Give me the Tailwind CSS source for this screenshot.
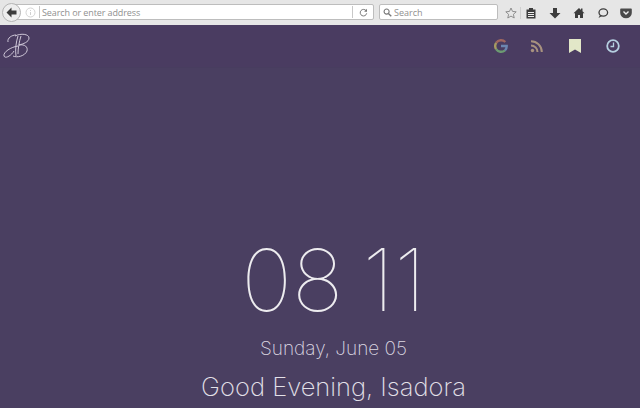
<!DOCTYPE html>
<html lang="en">
<head>
  <meta charset="UTF-8" />
  <title>New Tab</title>
  <script src="https://cdn.jsdelivr.net/npm/@tailwindcss/browser@4"></script>
</head>
<body class="w-[640px] h-[408px] overflow-hidden bg-[#4a3f61] font-['Inter',sans-serif]">
  <!-- Browser toolbar -->
  <div class="h-[25px] bg-[#e6e6e6] flex items-center relative font-['Open_Sans',sans-serif] text-[9px] text-[#909090]">
    <div class="absolute left-[2px] top-[3px] w-[19px] h-[19px] rounded-full bg-[#eeeeee] border border-[#b5b5b5] flex items-center justify-center z-10">
      <svg class="w-[11px] h-[11px]" viewBox="0 0 11 11"><path d="M0.500 5.500L5.500 0.500V3.500H10.500V7.500H5.500V10.500z" fill="#3d3d3d"/></svg>
    </div>
    <div class="ml-[12px] w-[362px] h-[16px] -mt-[1px] bg-white border border-[#bdbdbd] rounded-[2px] flex items-center">
      <svg class="ml-[12px] w-[11px] h-[11px]" viewBox="0 0 11 11"><circle cx="5.500" cy="5.500" r="4.500" fill="none" stroke="#d4d4d4"/><path d="M5.500 5v3M5.500 3v1" stroke="#d0d0d0"/></svg>
      <div class="ml-[3px] w-px h-[12px] bg-[#c8c8c8]"></div>
      <span class="ml-[2px] pt-[2px] tracking-[-0.1px]">Search or enter address</span>
      <div class="ml-auto mr-[1px] w-px h-[12px] bg-[#c8c8c8]"></div>
      <svg class="mx-[5px] w-[9px] h-[9px]" viewBox="0 0 11 11"><path d="M8.800 3.500a4 4 0 1 0 .6 3" fill="none" stroke="#777" stroke-width="1.200"/><path d="M9.800 1v3.500h-3.500z" fill="#777"/></svg>
    </div>
    <div class="ml-[5px] -mt-[1px] w-[119px] h-[16px] bg-white border border-[#bdbdbd] rounded-[2px] flex items-center">
      <svg class="ml-[3px] w-[9px] h-[9px]" viewBox="0 0 10 10"><circle cx="4" cy="4" r="2.800" fill="none" stroke="#777" stroke-width="1.200"/><path d="M6 6l3.200 3.200" stroke="#777" stroke-width="1.500"/></svg>
      <span class="ml-[2px] pt-[2px]">Search</span>
    </div>
    <svg class="ml-[7px] w-[12px] h-[12px]" viewBox="0 0 12 12"><path d="M6 1l1.500 3.400 3.700.4-2.800 2.500.8 3.700-3.200-1.900-3.200 1.900.8-3.700L.8 4.800l3.700-.4z" fill="none" stroke="#8e8e8e"/></svg>
    <div class="ml-[3px] w-px h-[12px] bg-[#cfcfcf]"></div>
    <div class="ml-[4px] flex items-center gap-[12px]">
      <svg class="w-[12px] h-[12px]" viewBox="0 0 12 12"><path d="M1.500 2.500h9v9h-9z" fill="#3d3d3d"/><path d="M4 1h4v2.500H4z" fill="#3d3d3d"/><path d="M3 5.500h6M3 7.500h6M3 9.500h6" stroke="#eee"/></svg>
      <svg class="w-[12px] h-[12px]" viewBox="0 0 12 12"><path d="M4 1h4v5h3.500L6 11.500.5 6H4z" fill="#3d3d3d"/></svg>
      <svg class="w-[12px] h-[12px]" viewBox="0 0 12 12"><path d="M6 1L.5 6.200H2V11h3V8h2v3h3V6.200h1.500L9.500 4.300V1.500H8v1.400z" fill="#3d3d3d"/></svg>
      <svg class="w-[12px] h-[12px]" viewBox="0 0 12 12"><ellipse cx="6.300" cy="5.500" rx="4.300" ry="3.600" fill="none" stroke="#3d3d3d" stroke-width="1.300"/><path d="M3 8l-1.500 3 3.500-2z" fill="#3d3d3d"/></svg>
      <svg class="w-[12px] h-[12px] -ml-px" viewBox="0 0 12 12"><path d="M1 1.500h10a.8.8 0 0 1 .8.8V6a5.800 5.200 0 0 1-11.600 0V2.300a.8.800 0 0 1 .8-.8z" fill="#4a4a4a"/><path d="M3.500 4.500L6 7l2.500-2.500" fill="none" stroke="#eee" stroke-width="1.400"/></svg>
    </div>
  </div>

  <!-- App header -->
  <header class="h-[43px] bg-[#4a3c61] border-b border-[#483d5f] flex items-center justify-between">
    <svg class="ml-[3px] w-[28px] h-[28px]" viewBox="0 0 28 28" fill="none" stroke="#dcd6e4" stroke-width="0.900">
      <path d="M12 4C18 1 26 2 26 6C26 10 20 12 16 13C22 12 25 15 24 19C22 24 14 26 10 24"/>
      <path d="M15 4C13 10 12 18 13 24"/>
      <path d="M18 4C16 10 15 17 15 22"/>
      <path d="M5 10C4 6 9 3 13 3"/>
      <path d="M15 14C8 15 0 20 1 24C2 27 8 24 11 19"/>
    </svg>
    <div class="flex items-center">
      <svg class="w-[14px] h-[14px]" viewBox="0 0 14 14" fill="none" stroke-width="2.400">
        <path d="M11.300 3A6 6 0 0 0 2.200 3.800" stroke="#a0675f"/>
        <path d="M2.200 3.800a6 6 0 0 0-.1 6.300" stroke="#a69a62"/>
        <path d="M2.100 10.100A6 6 0 0 0 11 11.300" stroke="#6c9a72"/>
        <path d="M11 11.300A5.600 5.600 0 0 0 12.700 7H7" stroke="#6c86b0"/>
      </svg>
      <svg class="ml-[22px] w-[13px] h-[13px]" viewBox="0 0 13 13" fill="none" stroke="#a8927f" stroke-width="2">
        <circle cx="2.500" cy="10.500" r="1.700" fill="#a8927f" stroke="none"/>
        <path d="M1 5.500a6.500 6.500 0 0 1 6.500 6.500"/>
        <path d="M1 1.200A10.800 10.800 0 0 1 11.800 12"/>
      </svg>
      <svg class="ml-[26px] w-[12px] h-[14px]" viewBox="0 0 12 14"><path d="M0 0h12v14L6 10.500 0 14z" fill="#e2e7c8"/></svg>
      <svg class="ml-[25px] mr-[20px] w-[14px] h-[14px]" viewBox="0 0 14 14" fill="none" stroke="#b5cfe0">
        <circle cx="7" cy="7" r="5.800" stroke-width="1.800"/>
        <path d="M7.500 3.500v4H4.500" stroke-width="1.300"/>
      </svg>
    </div>
  </header>

  <!-- Clock -->
  <main class="pl-[27px] flex flex-col items-center text-white">
    <div class="mt-[162px] h-[100px] text-[86px] leading-[100px] font-thin text-white/90 [word-spacing:-5px]">08 11</div>
    <div class="mt-[7px] h-[24px] text-[19px] leading-[24px] font-extralight text-[#dcd8e2]">Sunday, June 05</div>
    <div class="mt-[10px] text-[25.500px] leading-[32px] font-extralight text-[#e4e1e9]">Good Evening, Isadora</div>
  </main>
</body>
</html>
